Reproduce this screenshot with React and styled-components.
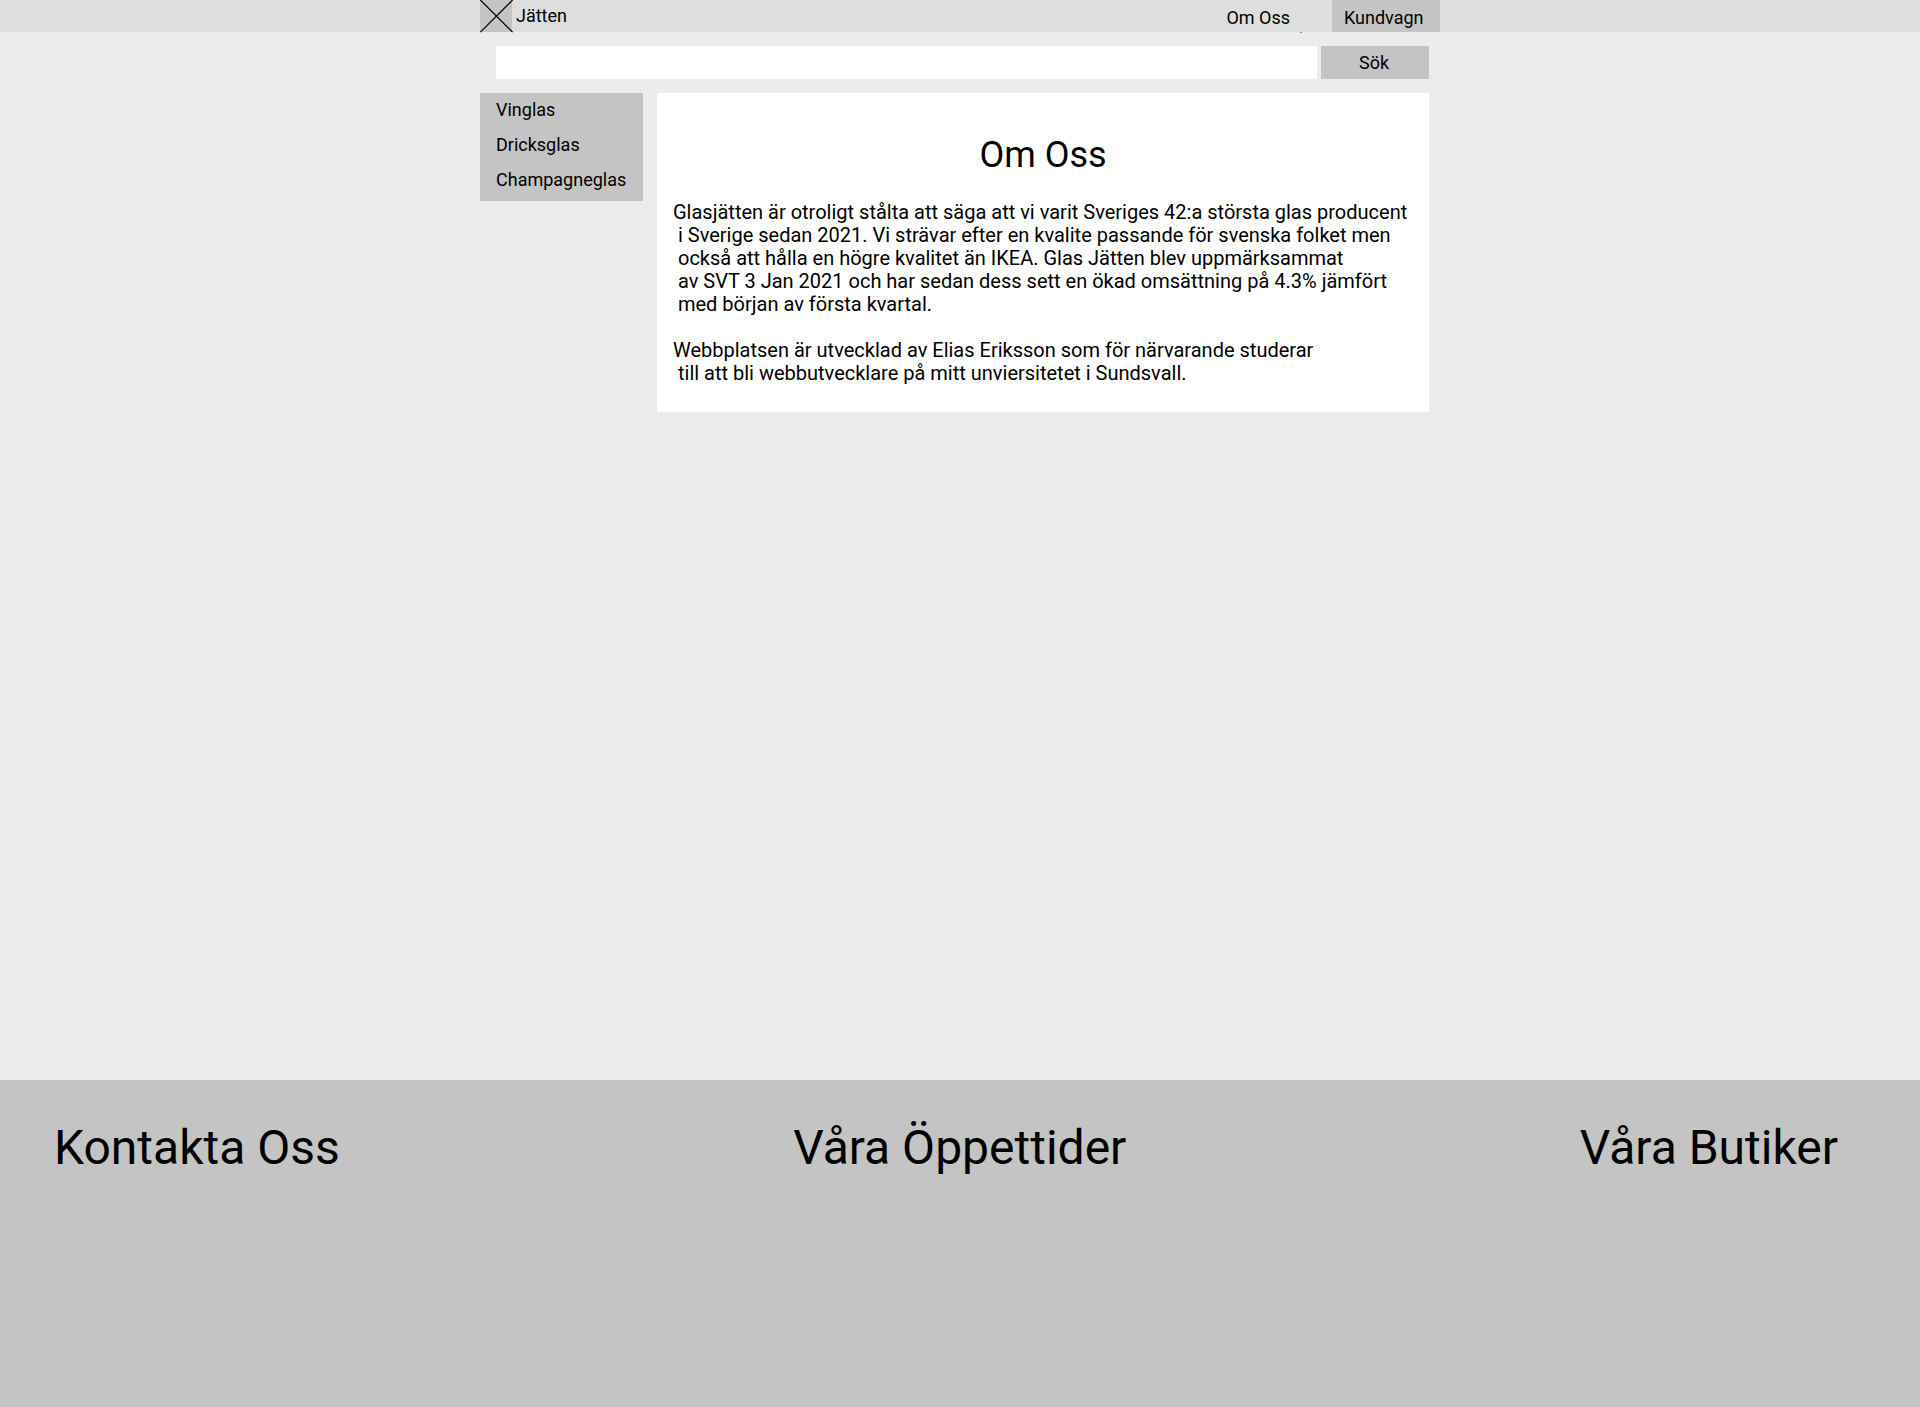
import React from "react";
import styled, { createGlobalStyle } from "styled-components";

const GlobalStyle = createGlobalStyle`
  *, *::before, *::after { box-sizing: border-box; }
  body {
    margin: 0;
    background: #ececec;
    color: #000;
    font-family: Roboto, "Liberation Sans", sans-serif;
    font-size: 18px;
    line-height: 21px;
  }
  a { color: inherit; text-decoration: none; }
  button, input { font: inherit; color: inherit; border: 0; border-radius: 0; }
`;

const Page = styled.div`
  display: flex;
  flex-direction: column;
  min-height: 100vh;
`;

const Header = styled.header`
  background: #dedede;
`;

const Container = styled.div`
  width: 100%;
  max-width: 960px;
  margin: 0 auto;
`;

const Bar = styled(Container)`
  display: flex;
  justify-content: space-between;
  height: 32px;
`;

const Brand = styled.a`
  display: flex;
  align-items: flex-start;
  gap: 4px;
`;

const BrandName = styled.span`
  padding-top: 5px;
`;

const Logo = styled.svg`
  display: block;
  width: 32px;
  height: 32px;
  background: #c4c4c4;
  overflow: visible;
`;

const Nav = styled.nav`
  display: flex;
`;

const NavLink = styled.a`
  position: relative;
  padding: 7px 42px 4px 0;
`;

const Tick = styled.svg`
  position: absolute;
  right: 30px;
  bottom: -1px;
  width: 2px;
  height: 1px;
`;

const CartButton = styled.button`
  width: 108px;
  padding: 7px 12px 4px;
  background: #c4c4c4;
  text-align: left;
`;

const Content = styled(Container)`
  display: flex;
  flex-direction: column;
  flex: 1;
  gap: 14px;
  padding: 14px 11px 0 0;
`;

const Search = styled.form`
  display: flex;
  gap: 4px;
  height: 33px;
  padding-left: 16px;
`;

const SearchInput = styled.input`
  flex: 1;
  min-width: 0;
  padding: 0 8px;
  background: #fff;
`;

const SearchButton = styled.button`
  width: 108px;
  padding: 0 2px 0 0;
  background: #c4c4c4;
`;

const Columns = styled.div`
  display: flex;
  align-items: flex-start;
  gap: 14px;
`;

const Sidebar = styled.nav`
  display: flex;
  flex-direction: column;
  gap: 14px;
  width: 163px;
  padding: 6px 16px 11px;
  background: #c4c4c4;
`;

const Article = styled.main`
  flex: 1;
  min-width: 0;
  padding: 41px 16px 27px;
  background: #fff;
`;

const Title = styled.h1`
  margin: 0 0 25px;
  font-size: 36px;
  font-weight: 400;
  line-height: 42px;
  text-align: center;
`;

const Paragraph = styled.p`
  margin: 0;
  font-size: 20px;
  line-height: 23px;
  white-space: pre-wrap;

  & + & { margin-top: 23px; }
`;

const Footer = styled.footer`
  display: flex;
  justify-content: space-between;
  min-height: 327px;
  padding: 40px 82px 40px 54px;
  background: #c4c4c4;
`;

const FooterTitle = styled.h2`
  margin: 0;
  font-size: 48px;
  font-weight: 400;
  line-height: 56px;
`;

const categories = ["Vinglas", "Dricksglas", "Champagneglas"];

const paragraphs = [
  [
    "Glasjätten är otroligt stålta att säga att vi varit Sveriges 42:a största glas producent",
    " i Sverige sedan 2021. Vi strävar efter en kvalite passande för svenska folket men",
    " också att hålla en högre kvalitet än IKEA. Glas Jätten blev uppmärksammat",
    " av SVT 3 Jan 2021 och har sedan dess sett en ökad omsättning på 4.3% jämfört",
    " med början av första kvartal.",
  ],
  [
    "Webbplatsen är utvecklad av Elias Eriksson som för närvarande studerar",
    " till att bli webbutvecklare på mitt unviersitetet i Sundsvall.",
  ],
];

const footerTitles = ["Kontakta Oss", "Våra Öppettider", "Våra Butiker"];

export default function App() {
  return (
    <Page>
      <GlobalStyle />
      <Header>
        <Bar>
          <Brand href="#">
            <Logo viewBox="0 0 32 32" aria-hidden="true">
              <path d="M.4 0 32.6 32.2M32.6 0 .4 32.2" stroke="#000" strokeWidth="1.2" fill="none" />
            </Logo>
            <BrandName>Jätten</BrandName>
          </Brand>
          <Nav>
            <NavLink href="#om-oss">
              Om Oss
              <Tick viewBox="0 0 2 1" aria-hidden="true">
                <path d="M0 .5H2" stroke="#888" />
              </Tick>
            </NavLink>
            <CartButton type="button">Kundvagn</CartButton>
          </Nav>
        </Bar>
      </Header>
      <Content>
        <Search role="search" onSubmit={(e) => e.preventDefault()}>
          <SearchInput type="search" aria-label="Sök produkter" />
          <SearchButton type="submit">Sök</SearchButton>
        </Search>
        <Columns>
          <Sidebar aria-label="Kategorier">
            {categories.map((name) => (
              <a key={name} href={`#${name.toLowerCase()}`}>{name}</a>
            ))}
          </Sidebar>
          <Article>
            <Title>Om Oss</Title>
            {paragraphs.map((lines) => (
              <Paragraph key={lines[0]}>{lines.join("\n")}</Paragraph>
            ))}
          </Article>
        </Columns>
      </Content>
      <Footer>
        {footerTitles.map((title) => (
          <FooterTitle key={title}>{title}</FooterTitle>
        ))}
      </Footer>
    </Page>
  );
}
